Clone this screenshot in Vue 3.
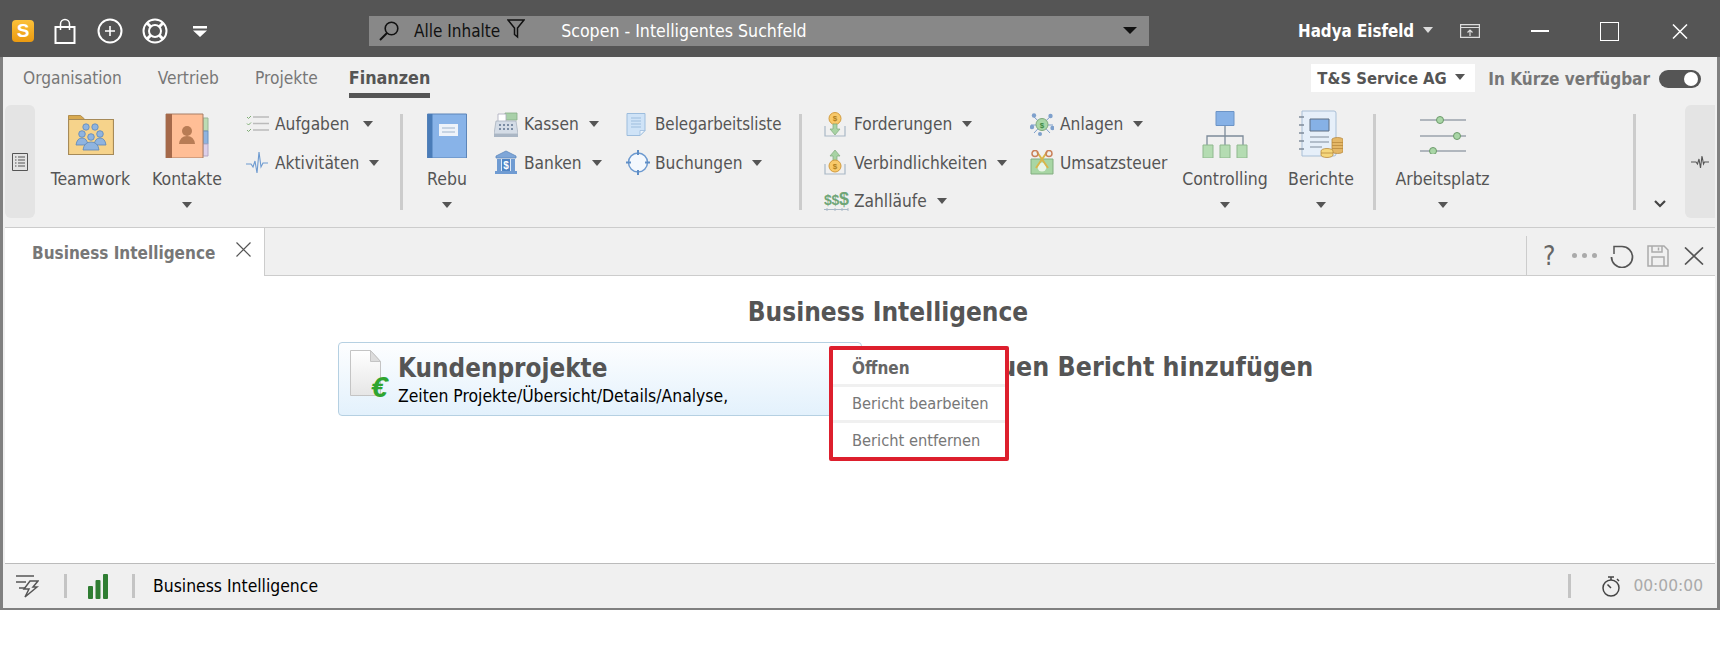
<template>
  <div class="app">
    <header class="titlebar">
      <span class="logo">S</span>
      <svg class="tb-bag" width="22" height="26" viewBox="0 0 22 26" fill="none" stroke="#fff" stroke-width="2">
        <path d="M1.5 9h19v16h-19z" />
        <path d="M6.5 12V6a4.5 4.5 0 0 1 9 0v6" stroke-width="1.5" />
      </svg>
      <svg class="tb-plus" width="26" height="26" viewBox="0 0 26 26" fill="none" stroke="#fff">
        <circle cx="13" cy="13" r="11.5" stroke-width="2" />
        <path d="M13 8v10M8 13h10" stroke-width="1.6" />
      </svg>
      <svg class="tb-ring" width="26" height="26" viewBox="0 0 26 26" fill="none" stroke="#fff" stroke-width="2">
        <circle cx="13" cy="13" r="11.5" />
        <circle cx="13" cy="13" r="6" />
        <path d="M5 5l4 4M21 5l-4 4M5 21l4-4M21 21l-4-4" stroke-width="3" />
      </svg>
      <svg class="tb-menu" width="14" height="11" viewBox="0 0 14 11" fill="#fff">
        <path d="M0 0h14v2.500H0zM0 4.500h14L7 11z" />
      </svg>

      <div class="search">
        <svg width="20" height="20" viewBox="0 0 20 20" fill="none" stroke="#111" stroke-width="1.6">
          <circle cx="12.500" cy="7.500" r="6.300" />
          <path d="M8 12L1 19" stroke-width="2" />
        </svg>
        <span class="search-scope">Alle Inhalte</span>
        <svg class="search-filter" width="18" height="20" viewBox="0 0 18 20" fill="none" stroke="#111" stroke-width="1.500">
          <path d="M1 1h16l-6.500 8v9l-3-2.500V9z" />
        </svg>
        <span class="search-text">Scopen - Intelligentes Suchfeld</span>
        <span class="search-caret"></span>
      </div>

      <span class="user">Hadya Eisfeld</span>
      <span class="caret caret-light"></span>
      <svg class="tb-monitor" width="20" height="14" viewBox="0 0 20 14" fill="none" stroke="#ddd" stroke-width="1.200">
        <path d="M.6.6h18.800v12.800H.6zM.6 3.500h18.800" />
        <path d="M10 12V6M7.500 8.500L10 6l2.500 2.500" />
      </svg>
      <span class="win-min"></span>
      <span class="win-max"></span>
      <svg class="win-close" width="16" height="15" viewBox="0 0 16 15" stroke="#fff" stroke-width="1.500">
        <path d="M1 .5l14 14M15 .5l-14 14" />
      </svg>
    </header>

    <div class="frame">
      <nav class="menubar">
        <span class="menu-tab">Organisation</span>
        <span class="menu-tab">Vertrieb</span>
        <span class="menu-tab">Projekte</span>
        <span class="menu-tab active">Finanzen</span>
        <div class="company">T&amp;S Service AG<span class="caret"></span></div>
        <span class="soon">In Kürze verfügbar</span>
        <span class="toggle"><i></i></span>
      </nav>

      <section class="ribbon">
        <div class="handle">
          <svg width="16" height="18" viewBox="0 0 16 18" fill="none" stroke="#555">
            <path d="M.5.500h15v17H.5z" />
            <path d="M3 4h1.500M6 4h7M3 7h1.500M6 7h7M3 10h1.500M6 10h7M3 13h1.500M6 13h7" stroke-width="1.200" />
          </svg>
        </div>

        <div class="big w-team">
          <div class="big-icon">
            <svg class="lift-3" width="46" height="40" viewBox="0 0 46 40">
              <path d="M.5 4V.5h12l4 3.500v3H.5z" fill="#d8a94f" stroke="#b08d4d" />
              <path d="M.5 4.500h45v35H.5z" fill="#f6d38b" stroke="#a68a58" stroke-width="1.200" />
              <g fill="#8fb4e0" stroke="#5d86b8" stroke-width=".8">
                <circle cx="18" cy="12" r="3.200" /><circle cx="27" cy="12" r="3.200" />
                <circle cx="14" cy="19" r="3.300" /><circle cx="32" cy="19" r="3.300" />
                <circle cx="23" cy="22" r="3.300" />
                <path d="M8 30q1-7 6-7t6 7zM26 30q1-7 6-7t6 7z" />
                <path d="M15 35q1-8 8-8t8 8z" />
              </g>
            </svg>
          </div>
          <span class="big-label">Teamwork</span>
        </div>

        <div class="big w-kontakte">
          <div class="big-icon">
            <svg width="44" height="45" viewBox="0 0 44 45">
              <path d="M38 5h5v13h-5z" fill="#bcdcb4" stroke="#9ab596" />
              <path d="M38 18h5v13h-5z" fill="#8fb4e0" stroke="#6f93bd" />
              <path d="M38 31h5v12h-5z" fill="#dcd0ea" stroke="#b5a8c4" />
              <path d="M1 1h37v44H1z" fill="#ffbe96" stroke="#a87f66" />
              <path d="M1 1h6v44H1z" fill="#a5694a" />
              <circle cx="22" cy="18" r="5" fill="#b87c55" />
              <path d="M14 31q1-8 8-8t8 8z" fill="#b87c55" />
            </svg>
          </div>
          <span class="big-label">Kontakte</span>
          <span class="caret"></span>
        </div>

        <div class="col w-aufg">
          <div class="row">
            <span class="slot">
              <svg width="23" height="18" viewBox="0 0 23 18" fill="none" stroke="#bbb" stroke-width="1.300">
                <path d="M7 2h16M7 8.500h16M7 15h16" />
                <path d="M1 2l1.500 1.500L5 1M1 8.500L2.500 10 5 7.500M1 15l1.500 1.500L5 14" stroke="#7fae74" stroke-width="1" />
              </svg>
            </span>
            <span>Aufgaben</span><span class="caret cm-14"></span>
          </div>
          <div class="row">
            <span class="slot">
              <svg width="22" height="22" viewBox="0 0 22 22" fill="none" stroke="#6d9ad0" stroke-width="1.100">
                <path d="M0 12h5l2 3 2-6 2 12 2-21 2 15 2-4h5" />
              </svg>
            </span>
            <span>Aktivitäten</span><span class="caret"></span>
          </div>
        </div>

        <span class="sep s-1"></span>

        <div class="big w-rebu">
          <div class="big-icon">
            <svg width="40" height="45" viewBox="0 0 40 45">
              <path d="M.5 1h39v44H.5z" fill="#88b3e8" stroke="#5c85b8" />
              <path d="M.5 1h5v44h-5z" fill="#4a7cb8" />
              <path d="M12 11h19v12H12z" fill="#eef3fa" />
              <path d="M15 15h13M15 19h13" stroke="#9fb4cc" />
            </svg>
          </div>
          <span class="big-label">Rebu</span>
          <span class="caret"></span>
        </div>

        <div class="col w-kassen">
          <div class="row">
            <span class="slot">
              <svg width="24" height="25" viewBox="0 0 24 25">
                <path d="M11 1h12v7H11z" fill="#a8d0a8" stroke="#85ad85" stroke-width=".8" />
                <path d="M4 2h8v9H4z" fill="#fff" stroke="#aab" stroke-width=".8" />
                <path d="M2 9h20l2 13H0z" fill="#d4dce6" stroke="#a8b2bf" stroke-width=".8" />
                <path d="M5 12h2v2H5zM9 12h2v2H9zM13 12h2v2h-2zM17 12h2v2h-2zM5 16h2v2H5zM9 16h2v2H9zM13 16h2v2h-2zM17 16h2v2h-2z" fill="#7a8ca3" />
                <path d="M0 22h24v3H0z" fill="#aab6c4" />
              </svg>
            </span>
            <span>Kassen</span><span class="caret"></span>
          </div>
          <div class="row">
            <span class="slot">
              <svg width="24" height="25" viewBox="0 0 24 25">
                <path d="M12 1l10 5v2H2V6z" fill="#7ea6d8" stroke="#5e88bd" stroke-width=".8" />
                <path d="M3 9h18v12H3z" fill="#dbe8f6" />
                <path d="M3 9h4v12H3zM17 9h4v12h-4z" fill="#6f9bd2" />
                <path d="M8 9h8v12H8z" fill="#4f84c4" />
                <path d="M1 21h22v3H1z" fill="#6f9bd2" />
                <text x="12" y="19" class="bank-glyph">$</text>
              </svg>
            </span>
            <span>Banken</span><span class="caret"></span>
          </div>
        </div>

        <div class="col w-beleg">
          <div class="row">
            <span class="slot">
              <svg width="20" height="23" viewBox="0 0 20 23">
                <path d="M1 .5h18v17l-5 5H1z" fill="#cfe3f7" stroke="#9dbddd" />
                <path d="M14 22.500v-5h5z" fill="#eef5fc" stroke="#9dbddd" stroke-width=".8" />
                <path d="M5 5h10M5 8h10M5 11h10M5 14h10" stroke="#9dbddd" />
              </svg>
            </span>
            <span class="beleg-text">Belegarbeitsliste</span>
          </div>
          <div class="row">
            <span class="slot">
              <svg width="24" height="25" viewBox="0 0 24 25" fill="none" stroke="#6d9ad0">
                <circle cx="12" cy="12.500" r="9.500" fill="#f4f8fd" stroke-width="1.500" />
                <path d="M12 0v5M12 20v5M0 12.500h5M19 12.500h5" stroke="#5f8ec6" stroke-width="2" />
              </svg>
            </span>
            <span>Buchungen</span><span class="caret"></span>
          </div>
        </div>

        <span class="sep s-2"></span>

        <div class="col w-ford">
          <div class="row">
            <span class="slot">
              <svg width="22" height="25" viewBox="0 0 22 25">
                <path d="M1 14v10h20V14" fill="none" stroke="#a9b8c6" stroke-width="1.200" />
                <circle cx="11" cy="6.500" r="6" fill="#f8c96a" stroke="#d39c3e" />
                <path d="M9 12h4v5h3l-5 6-5-6h3z" fill="#a8d3a4" stroke="#7fa97c" stroke-width=".7" />
                <text x="11" y="9" class="coin-glyph">$</text>
              </svg>
            </span>
            <span>Forderungen</span><span class="caret"></span>
          </div>
          <div class="row">
            <span class="slot">
              <svg width="22" height="25" viewBox="0 0 22 25">
                <path d="M1 14v10h20V14" fill="none" stroke="#a9b8c6" stroke-width="1.200" />
                <path d="M11 0l5 6h-3v6H9V6H6z" fill="#a8d3a4" stroke="#7fa97c" stroke-width=".7" />
                <circle cx="11" cy="16" r="6" fill="#f8c96a" stroke="#d39c3e" />
                <text x="11" y="18.500" class="coin-glyph">$</text>
              </svg>
            </span>
            <span>Verbindlichkeiten</span><span class="caret"></span>
          </div>
          <div class="row">
            <span class="slot">
              <svg width="26" height="24" viewBox="0 0 26 24">
                <text x="0" y="16" class="dollar-s">$</text>
                <text x="7.500" y="16" class="dollar-s">$</text>
                <text x="15" y="16" class="dollar-l">$</text>
                <path d="M0 20.500h24M3 19v3M11 19v3M18 19v3M24 19v3" stroke="#a9b8c6" fill="none" />
              </svg>
            </span>
            <span>Zahlläufe</span><span class="caret"></span>
          </div>
        </div>

        <div class="col w-anl">
          <div class="row">
            <span class="slot">
              <svg width="24" height="23" viewBox="0 0 24 23">
                <path d="M3 3l9 8.500M21 3l-9 8.500M1 12h22M4 20l8-8.500M20 20l-8-8.500" stroke="#7ea0cc" />
                <circle cx="12" cy="11.500" r="6" fill="#a9d6a6" stroke="#7fa97c" />
                <circle cx="4" cy="2.500" r="2.200" fill="#7ea0cc" /><circle cx="20.500" cy="3" r="2.200" fill="#7ea0cc" />
                <circle cx="2" cy="14" r="2.200" fill="#7ea0cc" /><circle cx="22.500" cy="15" r="2.200" fill="#7ea0cc" />
                <circle cx="10" cy="21" r="2" fill="#7ea0cc" />
                <text x="12" y="14.500" class="coin-glyph green">$</text>
              </svg>
            </span>
            <span>Anlagen</span><span class="caret"></span>
          </div>
          <div class="row">
            <span class="slot">
              <svg width="24" height="25" viewBox="0 0 24 25">
                <path d="M1 9h22v15H1z" fill="#a8d6a4" stroke="#82ad80" />
                <circle cx="12" cy="17" r="4.500" fill="#e9f5e7" />
                <path d="M7 2l11 16M17 2L6 18" stroke="#d9b64a" stroke-width="2" />
                <circle cx="5" cy="3.500" r="3" fill="none" stroke="#c9805a" stroke-width="1.500" />
                <circle cx="19" cy="3.500" r="3" fill="none" stroke="#c9805a" stroke-width="1.500" />
              </svg>
            </span>
            <span>Umsatzsteuer</span>
          </div>
        </div>

        <div class="big w-ctrl">
          <div class="big-icon">
            <svg width="46" height="47" viewBox="0 0 46 47" fill="none">
              <path d="M23 15v21M5 36V25h36v11" stroke="#7c8a99" stroke-width="1.300" />
              <path d="M14 .5h18v14H14z" fill="#86b1e6" stroke="#6c94c6" />
              <path d="M1 34h10v13H1zM18 34h10v13H18zM35 34h10v13H35z" fill="#b4dcb2" stroke="#8fb88e" />
            </svg>
          </div>
          <span class="big-label">Controlling</span>
          <span class="caret"></span>
        </div>

        <div class="big w-ber">
          <div class="big-icon">
            <svg width="44" height="48" viewBox="0 0 44 48">
              <path d="M3 1h32a2 2 0 0 1 2 2v41a2 2 0 0 1-2 2H3z" fill="#e6eff9" stroke="#a9bfd6" />
              <path d="M0 7h5M0 15h5M0 23h5M0 31h5M0 39h5" stroke="#7f8c9b" stroke-width="1.300" />
              <path d="M11 9h19v12H11z" fill="#86b1e6" stroke="#5f6f82" />
              <path d="M11 27h19M11 32h19M11 37h12" stroke="#7f8c9b" stroke-width="1.200" />
              <g stroke="#b98a3d" stroke-width=".8">
                <path d="M33 29a6 2.500 0 0 1 11 0v13a6 2.500 0 0 1-11 0z" fill="#e4b767" />
                <path d="M33 32.500h11M33 35.500h11M33 38.500h11" />
                <path d="M22 41a6 2.500 0 0 1 12 0v4a6 2.500 0 0 1-12 0z" fill="#f5d77c" />
                <path d="M22 43h12" />
              </g>
            </svg>
          </div>
          <span class="big-label">Berichte</span>
          <span class="caret"></span>
        </div>

        <span class="sep s-3"></span>

        <div class="big w-arb">
          <div class="big-icon">
            <svg class="lift-4" width="46" height="42" viewBox="0 0 46 42">
              <path d="M0 8h46M0 24h46M0 39h46" stroke="#9aa3ac" stroke-width="1.500" />
              <circle cx="20" cy="8" r="3.500" fill="#a9d6a6" stroke="#6d9a6c" />
              <circle cx="37" cy="24" r="3.500" fill="#a9d6a6" stroke="#6d9a6c" />
              <circle cx="13" cy="39" r="3.500" fill="#a9d6a6" stroke="#6d9a6c" />
            </svg>
          </div>
          <span class="big-label">Arbeitsplatz</span>
          <span class="caret"></span>
        </div>

        <span class="sep s-4"></span>

        <svg class="chevron" width="12" height="8" viewBox="0 0 12 8" fill="none" stroke="#444" stroke-width="2.200">
          <path d="M1 1l5 5 5-5" />
        </svg>

        <div class="handle handle-right">
          <svg width="18" height="14" viewBox="0 0 18 14" fill="none" stroke="#555" stroke-width="1.100">
            <path d="M0 7h5l1.500 2L8 4l1.500 9L11 1l1.500 8 1-2H18" />
          </svg>
        </div>
      </section>

      <main class="main">
        <div class="tabstrip">
          <div class="doc-tab">
            <span>Business Intelligence</span>
            <svg width="15" height="15" viewBox="0 0 15 15" stroke="#555" stroke-width="1.200">
              <path d="M.5.500l14 14M14.500.500l-14 14" />
            </svg>
          </div>
          <div class="tab-tools">
            <span class="tool-help">?</span>
            <span class="tool-dots"><i></i><i></i><i></i></span>
            <svg width="24" height="24" viewBox="0 0 24 24" fill="none" stroke="#555" stroke-width="1.700">
              <path d="M12 2.500A10.500 10.500 0 1 1 1.500 13" />
              <path d="M12 2.500H4V10" stroke-width="1.500" />
            </svg>
            <svg width="22" height="22" viewBox="0 0 22 22" fill="none" stroke="#aaa" stroke-width="1.500">
              <path d="M1 1h16l4 4v16H1z" />
              <path d="M5 1v6h10V1M11.500 2.500v3M5 21v-9h12v9" />
            </svg>
            <svg width="20" height="18" viewBox="0 0 20 18" stroke="#555" stroke-width="1.700">
              <path d="M1 .5l18 17M19 .5l-18 17" />
            </svg>
          </div>
        </div>

        <div class="content">
          <div class="bi-page">
            <h1 class="bi-title">Business Intelligence</h1>
            <div class="bi-row">
              <div class="report-card">
                <svg class="report-icon" width="42" height="56" viewBox="0 0 42 56">
                  <defs>
                    <linearGradient id="pageFill" x1="0" y1="0" x2="0" y2="1">
                      <stop offset="0" stop-color="#ffffff" />
                      <stop offset="1" stop-color="#e6e6e6" />
                    </linearGradient>
                  </defs>
                  <path d="M.5.500h20l10 11v34H.5z" fill="url(#pageFill)" stroke="#c4c4c4" />
                  <path d="M20.500.500v11h10z" fill="#dcdcdc" stroke="#c4c4c4" />
                  <text x="21" y="47" class="euro">€</text>
                </svg>
                <div class="report-text">
                  <div class="report-name">Kundenprojekte</div>
                  <div class="report-desc">Zeiten Projekte/Übersicht/Details/Analyse,</div>
                </div>
              </div>
              <div class="report-add">Neuen Bericht hinzufügen</div>

              <ul class="context-menu">
                <li class="strong">Öffnen</li>
                <li>Bericht bearbeiten</li>
                <li>Bericht entfernen</li>
              </ul>
            </div>
          </div>
        </div>
      </main>

      <footer class="statusbar">
        <svg width="24" height="24" viewBox="0 0 24 24" fill="none" stroke="#555" stroke-width="1.500">
          <path d="M1 2h18M1 8h10M4 14h6" />
          <path d="M15 7h8l-5 6h4L10 23l4-8h-5z" />
        </svg>
        <span class="st-sep sep-a"></span>
        <svg class="signal" width="20" height="25" viewBox="0 0 20 25" fill="#2f7d32">
          <rect x="0" y="12" width="5" height="13" rx="1" />
          <rect x="7.500" y="6" width="5" height="19" rx="1" />
          <rect x="15" y="0" width="5" height="25" rx="1" />
        </svg>
        <span class="st-sep sep-b"></span>
        <span class="st-text">Business Intelligence</span>
        <span class="st-sep sep-c"></span>
        <svg class="timer" width="19" height="21" viewBox="0 0 19 21" fill="none" stroke="#444" stroke-width="1.500">
          <circle cx="9" cy="12" r="8" />
          <path d="M6 1h6M9 1v3M15 3l2 2M9 12L5.500 8.500" />
        </svg>
        <span class="st-time">00:00:00</span>
      </footer>
    </div>
  </div>
</template>

<script setup>
</script>

<style>
html, body { margin: 0; background: #fff; }
</style>

<style scoped>
.app {
  width: 1720px;
  font-family: "DejaVu Sans Condensed", "DejaVu Sans", sans-serif;
  font-stretch: condensed;
  font-size: 17.2px;
  color: #555;
}

/* title bar */
.titlebar {
  height: 57px;
  background: #555;
  display: flex;
  align-items: center;
}
.logo {
  width: 22px; height: 22px;
  margin-left: 12px; margin-top: 5px;
  border-radius: 4px;
  background: linear-gradient(#fbc13a, #eb9a10);
  color: #fff;
  font: bold 19px/22px "Liberation Sans", sans-serif;
  text-align: center;
}
.tb-bag { margin-left: 20px; margin-top: 5px; }
.tb-plus { margin-left: 21px; margin-top: 5px; }
.tb-ring { margin-left: 19px; margin-top: 5px; }
.tb-menu { margin-left: 25px; margin-top: 5px; }
.search {
  width: 780px; height: 30px;
  margin-left: 162px; margin-top: 5px;
  background: #888;
  display: flex;
  align-items: center;
  padding-left: 10px;
  box-sizing: border-box;
  font-size: 17px;
}
.search-scope { margin-left: 15px; color: #111; }
.search-filter { margin-left: 7px; margin-top: -4px; }
.search-text { margin-left: 36px; color: #fff; font-size: 17.6px; }
.search-caret {
  margin-left: auto; margin-right: 12px; margin-top: -2px;
  border-left: 7px solid transparent;
  border-right: 7px solid transparent;
  border-top: 7px solid #111;
}
.user { margin-left: 149px; margin-top: 5px; color: #fff; font-weight: bold; font-size: 16.8px; }
.caret {
  display: inline-block;
  width: 0; height: 0;
  border-left: 5px solid transparent;
  border-right: 5px solid transparent;
  border-top: 6px solid #555;
  margin-left: 10px;
}
.caret.cm-14 { margin-left: 14px; }
.caret-light { border-top-color: #ddd; margin-top: 2px; margin-left: 9px; }
.tb-monitor { margin-left: 27px; margin-top: 5px; }
.win-min { width: 18px; height: 2px; background: #fff; margin-left: 51px; margin-top: 5px; }
.win-max { width: 17px; height: 17px; border: 1px solid #fff; margin-left: 51px; margin-top: 5px; }
.win-close { margin-left: 53px; margin-top: 6px; }

/* window body */
.frame {
  height: 553px;
  box-sizing: border-box;
  background: #f0f0f0;
  border: 3px solid #808080;
  border-width: 0 3px 2px 3px;
  display: flex;
  flex-direction: column;
}
.menubar {
  height: 43px;
  flex: none;
  display: flex;
  align-items: center;
  padding-left: 20px;
  box-sizing: border-box;
}
.menu-tab { color: #777; line-height: 30px; margin-right: 36px; margin-top: -2px; }
.menu-tab.active {
  margin-left: -5px;
  font-weight: bold;
  font-size: 17.8px;
  color: #555;
  position: relative;
}
.menu-tab.active::after {
  content: "";
  position: absolute;
  left: 0; right: 0; bottom: -5px;
  height: 5px;
  background: #555;
}
.company {
  margin-left: auto;
  width: 164px; height: 28px;
  background: #fff;
  font-weight: bold;
  font-size: 16.5px;
  display: flex;
  align-items: center;
  padding-left: 6px;
  box-sizing: border-box;
  margin-top: -1px;
}
.company .caret { margin-left: 8px; margin-top: -2px; }
.soon { font-weight: bold; color: #777; margin-left: 13px; font-size: 17px; white-space: nowrap; }
.toggle {
  flex: none;
  width: 42px; height: 18px;
  border-radius: 9px;
  background: #555;
  margin-left: 9px;
  margin-right: 16px;
  position: relative;
}
.toggle i {
  position: absolute;
  right: 3px; top: 2px;
  width: 14px; height: 14px;
  border-radius: 50%;
  background: #fff;
}

/* ribbon */
.ribbon {
  height: 127px;
  flex: none;
  display: flex;
  padding: 5px 2px 0;
  box-sizing: border-box;
}
.handle {
  width: 30px; height: 113px;
  background: #e4e4e4;
  border-radius: 6px;
  display: flex;
  align-items: center;
  justify-content: center;
  flex: none;
}
.handle-right { margin-left: auto; border-radius: 6px 0 0 6px; }
.big {
  display: flex;
  flex-direction: column;
  align-items: center;
  flex: none;
  padding-top: 6px;
}
.big-icon { height: 47px; display: flex; align-items: flex-end; justify-content: center; }
.lift-3 { margin-bottom: 3px; }
.lift-4 { margin-bottom: 4px; }
.big-label { margin-top: 10px; line-height: 22px; white-space: nowrap; font-size: 17.5px; }
.big .caret { margin: 12px 0 0; }
.w-team { width: 85px; margin-left: 13px; }
.w-kontakte { width: 76px; margin-left: 16px; }
.w-rebu { width: 40px; margin-left: 24px; }
.w-ctrl { width: 84px; }
.w-ber { width: 66px; margin-left: 21px; }
.w-arb { width: 91px; margin-left: 21px; }
.col { flex: none; }
.row { height: 38.5px; display: flex; align-items: center; white-space: nowrap; }
.slot { width: 30px; flex: none; display: flex; align-items: center; }
.w-aufg .slot, .w-beleg .slot { width: 29px; }
.beleg-text { font-size: 16.8px; }
.w-aufg { width: 151px; margin-left: 21px; }
.w-kassen { width: 132px; margin-left: 27px; }
.w-beleg { width: 170px; }
.w-ford { width: 206px; margin-left: 22px; }
.w-anl { width: 153px; }
.sep { width: 3px; height: 96px; background: #ccc; margin-top: 9px; flex: none; }
.s-1 { margin-left: 3px; }
.s-2 { margin-left: 3px; }
.s-3 { margin-left: 19px; }
.s-4 { margin-left: 145px; }
.chevron { margin-left: 18px; margin-top: 95px; flex: none; }
.bank-glyph, .coin-glyph {
  font: bold 10px "Liberation Sans", sans-serif;
  text-anchor: middle;
  fill: #fff;
}
.coin-glyph { font-size: 8px; fill: #b07f20; }
.coin-glyph.green { fill: #3e8a45; }
.dollar-s { font: bold 14px "Liberation Sans", sans-serif; fill: #6fa678; }
.dollar-l { font: bold 18px "Liberation Sans", sans-serif; fill: #6fa678; }

/* main */
.main {
  flex: 1;
  margin: 0 2px;
  background: #fff;
  border-top: 1px solid #ccc;
  border-bottom: 1px solid #bbb;
  display: flex;
  flex-direction: column;
  min-height: 0;
}
.tabstrip {
  height: 48px;
  flex: none;
  background: #f0f0f0;
  display: flex;
  border-bottom: 1px solid #ccc;
  box-sizing: border-box;
}
.doc-tab {
  width: 260px;
  height: 48px;
  background: #fff;
  border-right: 1px solid #ccc;
  box-sizing: border-box;
  display: flex;
  align-items: center;
  padding: 2px 0 0 27px;
  font-weight: bold;
  font-size: 17px;
  color: #777;
}
.doc-tab svg { margin-left: 21px; margin-top: -7px; }
.tab-tools {
  margin-left: auto;
  width: 189px;
  height: 39px;
  margin-top: 8px;
  border-left: 1px solid #ccc;
  display: flex;
  align-items: center;
  box-sizing: border-box;
}
.tool-help { margin-left: 16px; font-size: 26px; color: #666; line-height: 26px; }
.tool-dots { margin-left: 17px; display: flex; gap: 5px; margin-right: 13px; }
.tool-dots i { width: 5px; height: 5px; border-radius: 50%; background: #aaa; }
.tab-tools svg:nth-of-type(2) { margin-left: 13px; }
.tab-tools svg:nth-of-type(3) { margin-left: 15px; }
.content { flex: 1; }
.bi-page { width: 1100px; margin-left: 333px; }
.bi-title {
  margin: 0;
  padding-top: 20px;
  text-align: center;
  font-size: 26px;
  line-height: 32px;
  font-weight: bold;
  color: #555;
}
.bi-row {
  position: relative;
  display: flex;
  margin-top: 14px;
}
.report-card {
  width: 524px; height: 74px;
  box-sizing: border-box;
  border: 1px solid #b5d0e2;
  border-radius: 4px;
  background: linear-gradient(#fdfeff, #e3f1fc);
  display: flex;
  padding: 7px 0 0 11px;
}
.report-icon { flex: none; }
.report-text { margin-left: 6px; }
.report-name { font-size: 25.8px; font-weight: bold; line-height: 34px; color: #555; margin-top: 1px; }
.report-desc { color: #000; line-height: 22px; font-size: 17.4px; white-space: nowrap; }
.euro { font: italic bold 30px "Liberation Sans", sans-serif; fill: #2fa52f; }
.report-add {
  margin-left: 101px;
  font-size: 26.5px;
  font-weight: bold;
  line-height: 34px;
  margin-top: 8px;
  white-space: nowrap;
  color: #555;
}
.context-menu {
  position: absolute;
  left: 491px; top: 4px;
  width: 180px;
  margin: 0; padding: 0;
  list-style: none;
  background: #fff;
  border: 4px solid #dd1f2d;
  border-radius: 2px;
  box-sizing: border-box;
}
.context-menu li {
  height: 33px;
  line-height: 33px;
  padding-left: 19px;
  color: #777;
  border-top: 3px solid #f0f0f0;
  font-size: 16.3px;
  white-space: nowrap;
}
.context-menu li:last-child { height: 34px; line-height: 35px; }
.context-menu li.strong {
  height: 34px;
  line-height: 36px;
  border-top: 0;
  font-weight: bold;
  font-size: 17px;
  color: #666;
}

/* status bar */
.statusbar {
  height: 44px;
  flex: none;
  display: flex;
  align-items: center;
  padding-left: 12px;
}
.st-sep { width: 3px; height: 24px; background: #c4c4c4; flex: none; }
.sep-a { margin-left: 25px; }
.signal { margin-left: 21px; }
.sep-b { margin-left: 24px; }
.st-text { margin-left: 18px; color: #000; font-size: 17.4px; }
.sep-c { margin-left: auto; }
.timer { margin-left: 31px; }
.st-time {
  margin-left: 12px;
  margin-right: 14px;
  color: #aaa;
  font-family: "DejaVu Sans", sans-serif;
  font-stretch: normal;
  font-size: 15.5px;
}
</style>
